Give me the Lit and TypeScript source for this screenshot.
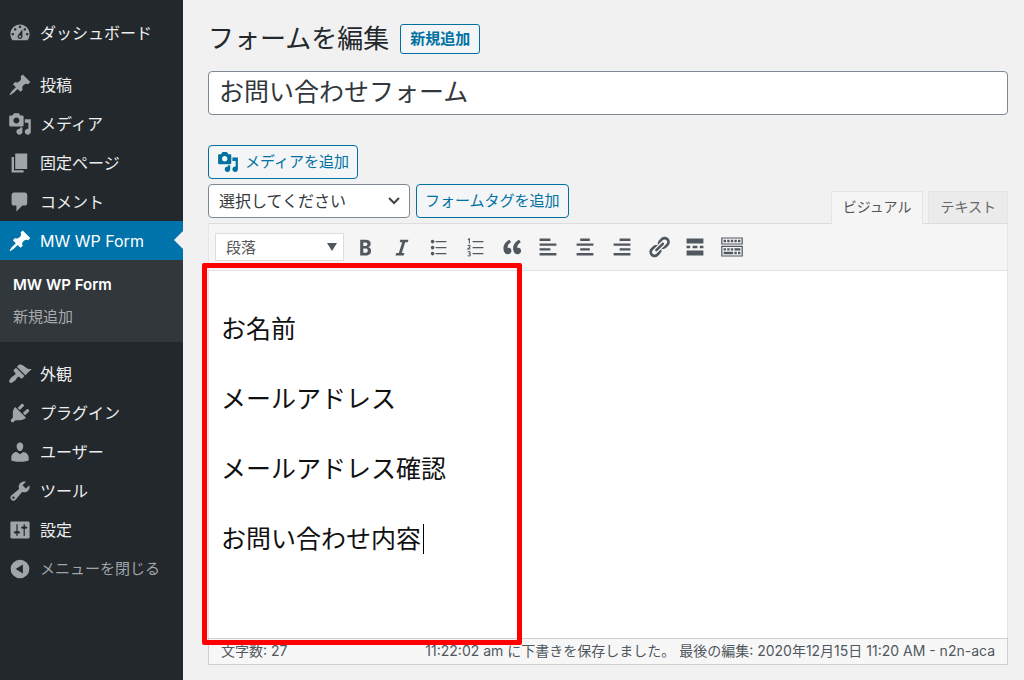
import { LitElement, html, css, svg } from "lit";
import { customElement, property } from "lit/decorators.js";
import { classMap } from "lit/directives/class-map.js";

const ICONS: Record<string, string> = {
  dashboard:
    "M3.76 16h12.48c1.1-1.37 1.76-3.11 1.76-5 0-4.42-3.58-8-8-8s-8 3.58-8 8c0 1.89.66 3.63 1.76 5zM10 4c.55 0 1 .45 1 1s-.45 1-1 1-1-.45-1-1 .45-1 1-1zM6 6c.55 0 1 .45 1 1s-.45 1-1 1-1-.45-1-1 .45-1 1-1zm8 0c.55 0 1 .45 1 1s-.45 1-1 1-1-.45-1-1 .45-1 1-1zm-5.37 5.55L12 7v6c0 1.1-.9 2-2 2s-2-.9-2-2c0-.57.24-1.08.63-1.45zM4 10c.55 0 1 .45 1 1s-.45 1-1 1-1-.45-1-1 .45-1 1-1zm12 0c.55 0 1 .45 1 1s-.45 1-1 1-1-.45-1-1 .45-1 1-1zm-5 3c0-.55-.45-1-1-1s-1 .45-1 1 .45 1 1 1 1-.45 1-1z",
  pin: "M10.44 3.02l1.82-1.82 6.36 6.35-1.83 1.82c-1.05-.68-2.48-.57-3.41.36l-.75.75c-.92.93-1.04 2.35-.35 3.41l-1.83 1.82-2.41-2.41-2.8 2.79c-.42.42-3.38 2.71-3.8 2.29s1.86-3.39 2.28-3.81l2.79-2.79L4.1 9.36l1.83-1.82c1.05.69 2.48.57 3.4-.36l.75-.75c.93-.92 1.05-2.35.36-3.41z",
  media:
    "M13 11V4c0-.55-.45-1-1-1h-1.67L9 1H5L3.67 3H2c-.55 0-1 .45-1 1v7c0 .55.45 1 1 1h10c.55 0 1-.45 1-1zM7 4.5c1.38 0 2.5 1.12 2.5 2.5S8.38 9.5 7 9.5 4.5 8.38 4.5 7 5.62 4.5 7 4.5zM14 6h5v10.5c0 1.38-1.12 2.5-2.5 2.5S14 17.88 14 16.5s1.12-2.5 2.5-2.5c.17 0 .34.02.5.05V9h-3V6zm-4 8.05V13h2v3.5c0 1.38-1.12 2.5-2.5 2.5S7 17.88 7 16.5 8.12 14 9.5 14c.17 0 .34.02.5.05z",
  page: "M6 15V2h10v13H6zm-1 1h8v2H3V5h2v11z",
  comment:
    "M5 2h9c1.1 0 2 .9 2 2v7c0 1.1-.9 2-2 2h-2l-5 5v-5H5c-1.1 0-2-.9-2-2V4c0-1.1.9-2 2-2z",
  appearance:
    "M14.48 11.06L7.41 3.99l1.5-1.5c.5-.56 2.3-.47 3.51.32 1.21.8 1.43 1.28 2.91 2.1 1.18.64 2.45 1.26 4.45.85zm-.71.71L6.7 4.7 4.93 6.47c-.39.39-.39 1.02 0 1.41l1.06 1.06c.39.39.39 1.03 0 1.42-.6.6-1.43 1.11-2.21 1.69-.35.26-.7.53-1.01.84C1.43 14.23.4 16.08 1.4 17.07c.99 1 2.84-.03 4.18-1.36.31-.31.58-.66.85-1.02.57-.78 1.08-1.61 1.69-2.21.39-.39 1.02-.39 1.41 0l1.06 1.06c.39.39 1.02.39 1.41 0z",
  plugin:
    "M13.11 4.36L9.87 7.6 8 5.73l3.24-3.24c.35-.34 1.05-.2 1.56.32.52.51.66 1.21.31 1.55zm-8 1.77l.91-1.12 9.01 9.01-1.19.84c-.71.71-2.63 1.16-3.82 1.16H6.14L4.9 17.26c-.59.59-1.54.59-2.12 0-.59-.58-.59-1.53 0-2.12l1.24-1.24v-3.88c0-1.13.4-3.19 1.09-3.89zm7.26 3.97l3.24-3.24c.34-.35 1.04-.21 1.55.31.52.51.66 1.21.31 1.55l-3.24 3.25z",
  user: "M10 9.25c-2.27 0-2.73-3.44-2.73-3.44C7 4.02 7.82 2 9.97 2c2.16 0 2.98 2.02 2.71 3.81 0 0-.41 3.44-2.68 3.44zm0 2.57L12.72 10c2.39 0 4.52 2.33 4.52 4.53v2.49s-3.65 1.13-7.24 1.13c-3.65 0-7.24-1.13-7.24-1.13v-2.49c0-2.25 1.94-4.48 4.47-4.48z",
  tools:
    "M16.68 9.77c-1.34 1.34-3.3 1.67-4.95.99l-5.41 6.52c-.99.99-2.59.99-3.58 0s-.99-2.59 0-3.57l6.52-5.42c-.68-1.65-.35-3.61.99-4.95 1.28-1.28 3.12-1.62 4.72-1.06l-2.89 2.89 2.82 2.82 2.86-2.87c.53 1.58.18 3.39-1.08 4.65zM3.81 16.21c.4.39 1.04.39 1.43 0 .4-.4.4-1.04 0-1.43-.39-.4-1.03-.4-1.43 0-.39.39-.39 1.03 0 1.43z",
  settings:
    "M18 16V4c0-.55-.45-1-1-1H3c-.55 0-1 .45-1 1v12c0 .55.45 1 1 1h14c.55 0 1-.45 1-1zM8 11h1c.55 0 1 .45 1 1s-.45 1-1 1H8v1.5c0 .28-.22.5-.5.5s-.5-.22-.5-.5V13H6c-.55 0-1-.45-1-1s.45-1 1-1h1V5.5c0-.28.22-.5.5-.5s.5.22.5.5V11zm5-2h-1c-.55 0-1-.45-1-1s.45-1 1-1h1V5.5c0-.28.22-.5.5-.5s.5.22.5.5V7h1c.55 0 1 .45 1 1s-.45 1-1 1h-1v5.5c0 .28-.22.5-.5.5s-.5-.22-.5-.5V9z",
  collapse:
    "M10 2.2a7.8 7.8 0 1 0 0 15.6a7.8 7.8 0 1 0 0-15.6zM12.4 6.2v7.6L6.4 10z",
  bold: "M6 4v13h4.54c1.37 0 2.46-.33 3.26-1 .8-.66 1.2-1.58 1.2-2.77 0-.84-.17-1.51-.51-2.01s-.9-.85-1.67-1.03v-.09c.57-.1 1.02-.4 1.36-.9s.51-1.13.51-1.91c0-1.14-.39-1.98-1.17-2.5C12.75 4.26 11.5 4 9.78 4H6zm2.57 5.15V6.26h1.36c.73 0 1.27.11 1.61.32.34.22.51.58.51 1.07 0 .54-.16.92-.47 1.15s-.82.35-1.51.35h-1.5zm0 2.19h1.6c1.44 0 2.16.53 2.16 1.61 0 .6-.17 1.05-.51 1.34s-.86.43-1.57.43H8.57v-3.38z",
  italic: "M14.78 6h-2.13l-2.8 9h2.12l-.62 2H4.6l.62-2h2.14l2.8-9H8.03l.62-2h6.75z",
  bullets:
    "M5.5 7C4.67 7 4 6.33 4 5.5 4 4.68 4.67 4 5.5 4 6.32 4 7 4.68 7 5.5 7 6.33 6.32 7 5.5 7zM8 5h9v1H8V5zm-2.5 7c-.83 0-1.5-.67-1.5-1.5C4 9.68 4.67 9 5.5 9c.82 0 1.5.68 1.5 1.5 0 .83-.68 1.5-1.5 1.5zM8 10h9v1H8v-1zm-2.5 7c-.83 0-1.5-.67-1.5-1.5 0-.82.67-1.5 1.5-1.5.82 0 1.5.68 1.5 1.5 0 .83-.68 1.5-1.5 1.5zM8 15h9v1H8v-1z",
  quote:
    "M9.49 13.22c0-.74-.2-1.38-.61-1.9-.62-.78-1.83-.88-2.53-.72-.29-1.65 1.11-3.75 2.92-4.65L7.88 4c-2.73 1.3-5.42 4.28-4.96 8.05C3.21 14.43 4.59 16 6.54 16c.85 0 1.56-.25 2.12-.75s.83-1.18.83-2.03zm8.05 0c0-.74-.2-1.38-.61-1.9-.63-.78-1.83-.88-2.53-.72-.29-1.65 1.11-3.75 2.92-4.65L15.93 4c-2.73 1.3-5.41 4.28-4.95 8.05.29 2.38 1.66 3.95 3.61 3.95.85 0 1.56-.25 2.12-.75s.83-1.18.83-2.03z",
  alignleft: "M12 5V3H3v2h9zm5 4V7H3v2h14zm-5 4v-2H3v2h9zm5 4v-2H3v2h14z",
  aligncenter: "M14 5V3H6v2h8zm3 4V7H3v2h14zm-3 4v-2H6v2h8zm3 4v-2H3v2h14z",
  alignright: "M17 5V3H8v2h9zm0 4V7H3v2h14zm0 4v-2H8v2h9zm0 4v-2H3v2h14z",
  link: "M17.74 2.76c1.68 1.69 1.68 4.41 0 6.1l-1.53 1.52c-1.12 1.12-2.7 1.47-4.14 1.09l2.62-2.61.76-.77.76-.76c.84-.84.84-2.2 0-3.04-.84-.85-2.2-.85-3.04 0l-.77.76-3.38 3.38c-.37-1.44-.02-3.02 1.1-4.14l1.52-1.53c1.69-1.68 4.42-1.68 6.1 0zM8.59 13.43l5.34-5.34c.42-.42.42-1.1 0-1.52-.44-.43-1.13-.39-1.53 0l-5.33 5.34c-.42.42-.42 1.1 0 1.52.44.43 1.13.39 1.52 0zm-.76 2.29l4.14-4.15c.38 1.44.03 3.02-1.09 4.14l-1.52 1.53c-1.69 1.68-4.41 1.68-6.1 0-1.68-1.68-1.68-4.42 0-6.1l1.53-1.52c1.12-1.12 2.7-1.47 4.14-1.1l-4.14 4.15c-.85.84-.85 2.2 0 3.05.84.84 2.2.84 3.04 0z",
  more: "M17 7V3H3v4h14zM6 11V9H3v2h3zm6 0V9H8v2h4zm5 0V9h-3v2h3zm0 6v-4H3v4h14z",
  kitchensink:
    "M19 2v6H1V2h18zm-1 5V3H2v4h16zM5 4v2H3V4h2zm3 0v2H6V4h2zm3 0v2H9V4h2zm3 0v2h-2V4h2zm3 0v2h-2V4h2zm2 5v9H1V9h18zm-1 8v-7H2v7h16zM5 11v2H3v-2h2zm3 0v2H6v-2h2zm3 0v2H9v-2h2zm6 0v2h-5v-2h5zm-6 3v2H3v-2h8zm3 0v2h-2v-2h2zm3 0v2h-2v-2h2z",
};

@customElement("wp-icon")
class WpIcon extends LitElement {
  @property() name = "";

  static styles = css`
    :host {
      display: block;
      flex: none;
      width: 24px;
      height: 24px;
    }
    svg {
      display: block;
      width: 100%;
      height: 100%;
      fill: currentColor;
    }
    .thin {
      fill: none;
      stroke: currentColor;
      stroke-width: 0.9;
    }
  `;

  render() {
    const shape =
      this.name === "numbers"
        ? svg`<path d="M8 5h9v1H8zM8 10h9v1H8zM8 15h9v1H8z"/>
            <path class="thin" d="M4.1 3.9l1.2-.8V7M4 9.2c.3-.9 2-.8 2 .2 0 .8-1.2 1.5-2 2.3h2.2M4 14.2c.5-.7 2-.6 2 .3 0 .7-.6 1-1.2 1 .7 0 1.4.3 1.4 1.1 0 1.1-1.7 1.2-2.3.5"/>`
        : svg`<path fill-rule="evenodd" d=${ICONS[this.name]}/>`;
    return html`<svg viewBox="0 0 20 20" aria-hidden="true">${shape}</svg>`;
  }
}

@customElement("admin-menu")
class AdminMenu extends LitElement {
  static styles = css`
    :host {
      display: block;
      background: #23282d;
    }
    nav {
      padding-top: 13px;
    }
    ul {
      list-style: none;
      margin: 0;
      padding: 0;
    }
    .group {
      margin-bottom: 13px;
    }
    .group.open {
      margin-bottom: 12px;
    }
    .item {
      box-sizing: border-box;
      width: 100%;
      height: 39px;
      display: flex;
      align-items: center;
      gap: 8px;
      padding: 0 8px;
      border: 0;
      background: none;
      font: inherit;
      font-size: 16px;
      line-height: 24px;
      color: #eee;
      text-decoration: none;
      white-space: nowrap;
    }
    .item wp-icon {
      color: #a0a5aa;
    }
    .item.current {
      position: relative;
      background: #0073aa;
      color: #fff;
    }
    .item.current wp-icon {
      color: #fff;
    }
    .item.current::after {
      content: "";
      position: absolute;
      right: 0;
      top: 10px;
      border: solid transparent;
      border-width: 9px;
      border-left-width: 0;
      border-right-color: #f1f1f1;
    }
    .submenu {
      background: #32373c;
      padding: 9px 0;
    }
    .sub {
      display: block;
      padding: 4px 13px;
      font-size: 15px;
      line-height: 24px;
      color: #a7abaf;
      text-decoration: none;
    }
    .sub.current {
      color: #fff;
      font-weight: 600;
    }
    .item.collapse {
      font-size: 15px;
      color: #a0a5aa;
    }
  `;

  item(icon: string, label: string, current = false) {
    return html`<a class=${classMap({ item: true, current })} href="#"
      ><wp-icon name=${icon}></wp-icon><span>${label}</span></a
    >`;
  }

  render() {
    return html`<nav aria-label="メインメニュー">
      <ul class="group">
        <li>${this.item("dashboard", "ダッシュボード")}</li>
      </ul>
      <ul class="group open">
        <li>${this.item("pin", "投稿")}</li>
        <li>${this.item("media", "メディア")}</li>
        <li>${this.item("page", "固定ページ")}</li>
        <li>${this.item("comment", "コメント")}</li>
        <li>
          ${this.item("pin", "MW WP Form", true)}
          <ul class="submenu">
            <li><a class="sub current" href="#">MW WP Form</a></li>
            <li><a class="sub" href="#">新規追加</a></li>
          </ul>
        </li>
      </ul>
      <ul>
        <li>${this.item("appearance", "外観")}</li>
        <li>${this.item("plugin", "プラグイン")}</li>
        <li>${this.item("user", "ユーザー")}</li>
        <li>${this.item("tools", "ツール")}</li>
        <li>${this.item("settings", "設定")}</li>
        <li>
          <button class="item collapse" type="button">
            <wp-icon name="collapse"></wp-icon><span>メニューを閉じる</span>
          </button>
        </li>
      </ul>
    </nav>`;
  }
}

const TOOLS: [string, string][] = [
  ["bold", "太字"],
  ["italic", "イタリック"],
  ["bullets", "番号なしリスト"],
  ["numbers", "番号付きリスト"],
  ["quote", "引用"],
  ["alignleft", "左寄せ"],
  ["aligncenter", "中央揃え"],
  ["alignright", "右寄せ"],
  ["link", "リンクの挿入/編集"],
  ["more", "「続きを読む」タグを挿入"],
  ["kitchensink", "ツールバー切り替え"],
];

@customElement("form-editor")
class FormEditor extends LitElement {
  static styles = css`
    :host {
      display: block;
    }
    .button {
      box-sizing: border-box;
      height: 34px;
      display: flex;
      align-items: center;
      gap: 6px;
      padding: 0 8px;
      border: 1px solid #0071a1;
      border-radius: 4px;
      background: #f3f5f6;
      color: #0071a1;
      font: inherit;
      font-size: 15px;
      line-height: 24px;
      white-space: nowrap;
    }
    .button wp-icon {
      width: 22px;
      height: 22px;
    }
    .head {
      display: flex;
      justify-content: space-between;
      align-items: flex-end;
    }
    .actions {
      display: grid;
      gap: 5px;
      justify-items: start;
      padding-bottom: 5px;
    }
    .row {
      display: flex;
      gap: 6px;
    }
    .select {
      display: grid;
      align-items: center;
    }
    .select > * {
      grid-area: 1 / 1;
    }
    .select select {
      box-sizing: border-box;
      appearance: none;
      margin: 0;
      border: 1px solid #7e8993;
      border-radius: 4px;
      background: #fff;
      font: inherit;
      color: #32373c;
      height: 34px;
      width: 202px;
      padding: 0 10px;
      font-size: 16px;
    }
    .select svg {
      justify-self: end;
      width: 12px;
      height: 8px;
      margin-right: 10px;
      pointer-events: none;
      fill: none;
      stroke: #444;
      stroke-width: 2;
    }
    .tabs {
      display: flex;
      gap: 5px;
    }
    .tab {
      box-sizing: border-box;
      height: 32px;
      padding: 0 11px 2px;
      border: 1px solid #e5e5e5;
      border-bottom: 0;
      background: #ebebeb;
      color: #666;
      font: inherit;
      font-size: 14px;
      line-height: 24px;
      white-space: nowrap;
    }
    .tab.active {
      height: 33px;
      margin-bottom: -1px;
      background: #f5f5f5;
      color: #555;
      position: relative;
      z-index: 1;
    }
    .editor {
      position: relative;
      border: 1px solid #e5e5e5;
      border-top-color: #dcdcde;
      background: #fff;
    }
    .toolbar {
      display: flex;
      align-items: center;
      gap: 9px;
      height: 46px;
      padding-left: 6px;
      background: #f5f5f5;
      border-bottom: 1px solid #e2e4e7;
    }
    .select.format select {
      width: 129px;
      height: 28px;
      border-color: #ddd;
      border-radius: 0;
      font-size: 15px;
      color: #555;
    }
    .select.format svg {
      width: 10px;
      height: 8px;
      margin-right: 7px;
      fill: #50575e;
      stroke: none;
    }
    .tools {
      display: flex;
      justify-content: space-between;
      width: 391px;
    }
    .tool {
      padding: 0;
      border: 0;
      background: none;
      color: #50575e;
    }
    .content {
      box-sizing: border-box;
      min-height: 367px;
      padding: 39px 12px;
      outline: none;
      font-size: 25px;
      line-height: 38px;
      color: #111;
    }
    .content p {
      margin: 0 0 32px;
    }
    .caret {
      display: inline-block;
      width: 1px;
      height: 30px;
      margin-left: 2px;
      vertical-align: -6px;
      background: #000;
    }
    .status {
      display: flex;
      justify-content: space-between;
      margin: 0 -1px -1px;
      padding: 1px 12px 2px;
      border: 1px solid #ccd0d4;
      background: #f7f7f7;
      font-size: 14px;
      line-height: 22px;
      color: #50575e;
      white-space: nowrap;
    }
    /* red frame marking the fields typed into the form */
    .highlight {
      position: absolute;
      box-sizing: border-box;
      left: -7px;
      top: 39px;
      width: 320px;
      height: 382px;
      border: 5px solid #f00;
      border-radius: 2px;
      pointer-events: none;
    }
  `;

  render() {
    return html`
      <div class="head">
        <div class="actions">
          <button class="button" type="button">
            <wp-icon name="media"></wp-icon>メディアを追加
          </button>
          <div class="row">
            <div class="select">
              <select aria-label="フォームタグ">
                <option>選択してください</option>
              </select>
              <svg viewBox="0 0 12 8" aria-hidden="true"><path d="M1 1l5 5 5-5" /></svg>
            </div>
            <button class="button" type="button">フォームタグを追加</button>
          </div>
        </div>
        <div class="tabs">
          <button class="tab active" type="button">ビジュアル</button>
          <button class="tab" type="button">テキスト</button>
        </div>
      </div>
      <div class="editor">
        <div class="toolbar">
          <div class="select format">
            <select aria-label="書式">
              <option>段落</option>
            </select>
            <svg viewBox="0 0 10 8" aria-hidden="true"><path d="M0 0h10L5 8z" /></svg>
          </div>
          <div class="tools">
            ${TOOLS.map(
              ([icon, label]) =>
                html`<button class="tool" type="button" aria-label=${label}>
                  <wp-icon name=${icon}></wp-icon>
                </button>`
            )}
          </div>
        </div>
        <div class="content" contenteditable="true" role="textbox" aria-label="本文">
          <p>お名前</p>
          <p>メールアドレス</p>
          <p>メールアドレス確認</p>
          <p>お問い合わせ内容<span class="caret"></span></p>
        </div>
        <div class="status">
          <span>文字数: 27</span>
          <span>11:22:02 am に下書きを保存しました。 最後の編集: 2020年12月15日 11:20 AM - n2n-aca</span>
        </div>
        <div class="highlight"></div>
      </div>
    `;
  }
}

@customElement("app-root")
class AppRoot extends LitElement {
  static styles = css`
    :host {
      display: grid;
      grid-template-columns: 183px minmax(0, 1fr);
      min-height: 100vh;
      background: #f1f1f1;
      font-family: Inter, "Noto Sans CJK JP", sans-serif;
      color: #23282d;
    }
    main {
      padding: 19px 16px 15px 25px;
    }
    header {
      display: flex;
      align-items: center;
      gap: 11px;
      height: 40px;
    }
    h1 {
      margin: 0;
      font-size: 26px;
      line-height: 40px;
      font-weight: 400;
    }
    .add {
      padding: 2px 9px;
      border: 1px solid #0071a1;
      border-radius: 3px;
      background: #f3f5f6;
      color: #0071a1;
      font-size: 15px;
      line-height: 24px;
      font-weight: 700;
      text-decoration: none;
    }
    .title {
      box-sizing: border-box;
      display: block;
      width: 100%;
      height: 44px;
      margin: 12px 0 30px;
      padding: 0 10px 6px;
      border: 1px solid #7e8993;
      border-radius: 4px;
      background: #fff;
      font: inherit;
      font-size: 25px;
      color: #32373c;
    }
  `;

  render() {
    return html`
      <admin-menu></admin-menu>
      <main lang="ja">
        <header>
          <h1>フォームを編集</h1>
          <a class="add" href="#">新規追加</a>
        </header>
        <input class="title" type="text" aria-label="タイトル" .value=${"お問い合わせフォーム"} />
        <form-editor></form-editor>
      </main>
    `;
  }
}
